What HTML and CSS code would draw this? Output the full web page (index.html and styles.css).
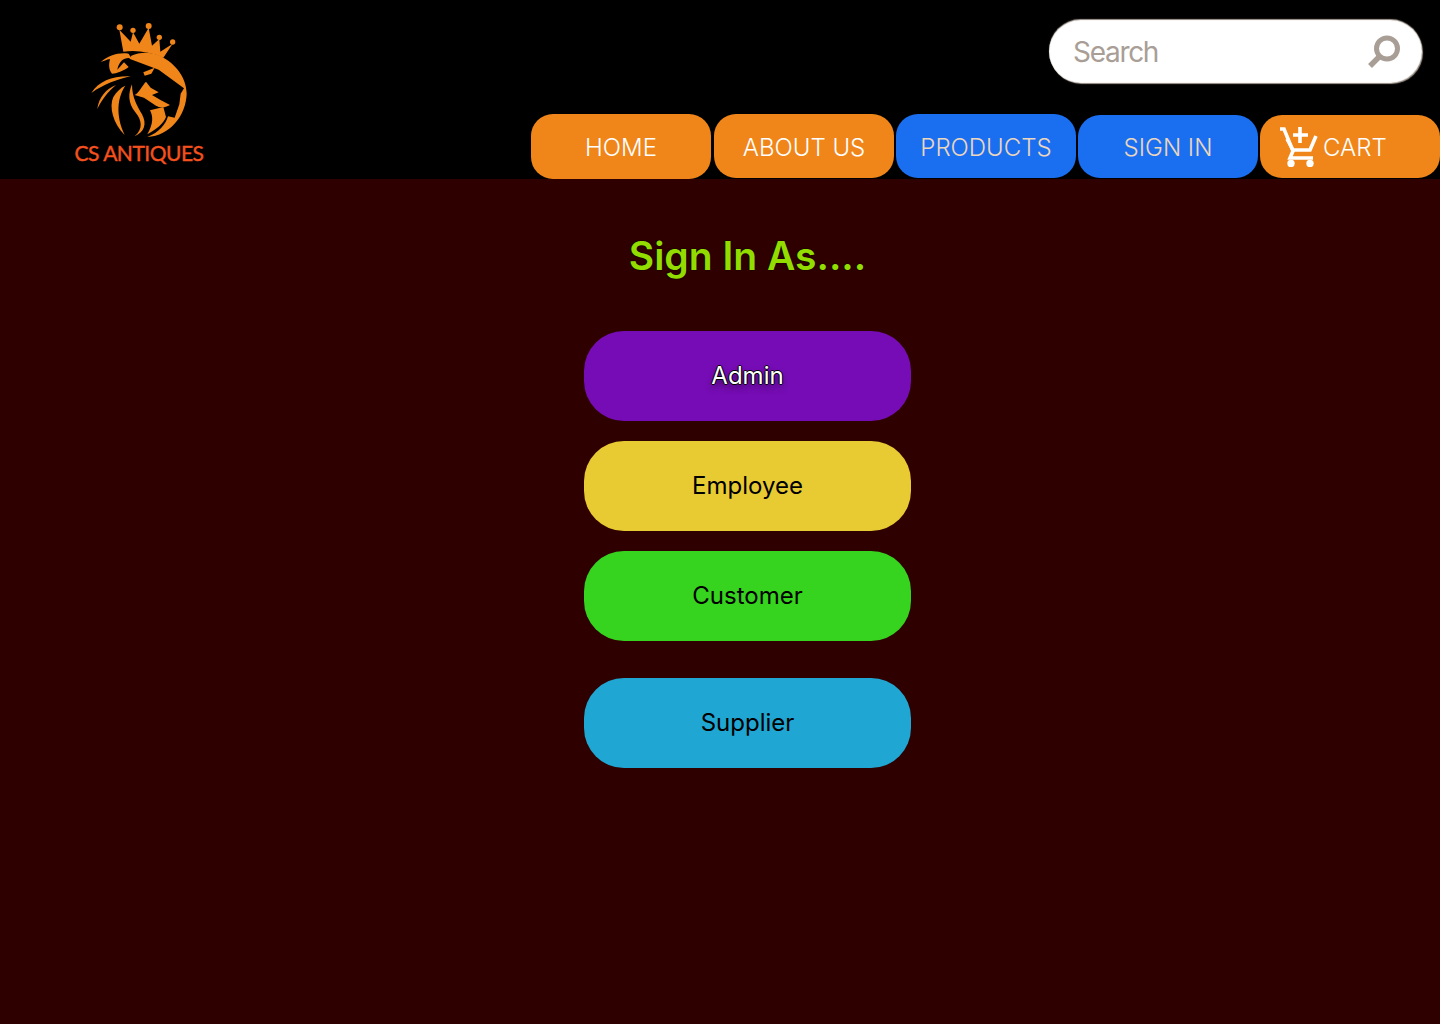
FILE: index.html
```html
<!DOCTYPE html>
<html lang="en">
<head>
    <meta charset="UTF-8">
    <meta name="viewport" content="width=device-width, initial-scale=1.0">
    <title>CS Antiques - Sign In</title>
    <link rel="stylesheet" href="styles.css">
</head>
<body>
    <header class="site-header">
        <a class="logo" href="#">
            <svg class="logo-mark" viewBox="90 38 294 345" aria-hidden="true">
                <g fill="#f0861a">
                    <circle cx="179" cy="51" r="9"/>
                    <circle cx="219" cy="60" r="8"/>
                    <circle cx="266" cy="47" r="9"/>
                    <circle cx="298" cy="81" r="8"/>
                    <circle cx="338" cy="95" r="8"/>
                    <path d="M190 124 L178 58 L212 94 L219 66 L238 100 L266 52 L276 106 L298 86 L301 124 L338 100 L310 142 Q250 116 190 124Z"/>
                    <path d="M300 136 C350 161 380 205 380 250 C378 315 330 376 262 380 C298 366 316 344 324 318 L344 322 L358 282 L362 250 L372 234 L296 178 L208 145 L214 136 C240 124 272 124 300 136Z"/>
                    <path d="M122 156 C146 134 176 126 206 130 L214 144 C194 140 178 150 172 178 L192 156 L206 170 C190 182 170 190 156 190 C146 178 146 162 150 146 C140 148 130 152 122 156Z"/>
                    <path d="M94 248 C116 212 160 196 212 198 C170 208 130 222 94 248Z"/>
                    <path d="M112 296 C116 262 138 236 168 224 C142 246 126 268 112 296Z"/>
                    <path d="M194 374 C160 340 146 290 160 260 C170 244 182 232 196 226 C172 262 166 314 194 374Z"/>
                    <path d="M224 378 C250 356 246 330 226 306 C204 278 204 250 216 222 C216 262 232 288 246 312 C262 342 252 366 224 378Z"/>
                    <path d="M250 186 L284 172 L274 190 L254 196Z"/>
                    <path d="M224 254 C238 246 246 226 258 214 L272 232 L296 246 L276 254 L300 268 L330 284 C310 296 296 290 288 286 L252 262Z"/>
                    <path d="M270 300 L310 290 L318 320 C310 340 290 356 262 372 C280 340 280 320 270 300Z"/>
                </g>
            </svg>
            <span class="logo-text">CS ANTIQUES</span>
        </a>

        <div class="header-right">
            <form class="search-box">
                <input class="search-input" type="text" placeholder="Search">
                <svg class="search-icon" viewBox="0 0 34 34" width="34" height="34" aria-hidden="true">
                    <circle cx="20" cy="13.5" r="10.5" fill="none" stroke="#a89e96" stroke-width="5"/>
                    <path d="M12 22 L3 31" stroke="#a89e96" stroke-width="5.5" fill="none"/>
                </svg>
            </form>
            <nav class="main-nav">
                <a class="nav-btn orange first" href="#">HOME</a>
                <a class="nav-btn orange tall" href="#">ABOUT US</a>
                <a class="nav-btn blue tall" href="#">PRODUCTS</a>
                <a class="nav-btn blue" href="#">SIGN IN</a>
                <a class="nav-btn orange cart" href="#">
                    <svg class="cart-icon" viewBox="0 0 38 40" width="38" height="40" aria-hidden="true">
                        <g fill="none" stroke="#fff" stroke-width="3.6">
                            <path d="M0 2 L4 2 L13 24 L10 31 L33 31"/>
                            <path d="M7 12 L13 23 L30 23 L36 9"/>
                            <path d="M20 0 L20 16 M13 8 L28 8"/>
                        </g>
                        <circle cx="11" cy="36.5" r="3.7" fill="#fff"/>
                        <circle cx="30" cy="36.5" r="3.7" fill="#fff"/>
                    </svg>
                    <span class="cart-label">CART</span>
                </a>
            </nav>
        </div>
    </header>

    <main class="signin">
        <h1 class="signin-title">Sign In As....</h1>
        <a class="role-btn admin" href="#">Admin</a>
        <a class="role-btn employee" href="#">Employee</a>
        <a class="role-btn customer" href="#">Customer</a>
        <a class="role-btn supplier" href="#">Supplier</a>
    </main>
</body>
</html>
```

FILE: styles.css
```css
* {
    box-sizing: border-box;
}

body {
    margin: 0;
    min-height: 1024px;
    background-color: #2f0000;
    font-family: 'Inter', sans-serif;
}

a {
    text-decoration: none;
}

.site-header {
    height: 179px;
    background-color: #000;
    display: flex;
    justify-content: space-between;
}

.logo {
    width: 130px;
    margin-left: 74px;
    padding-top: 23px;
    display: flex;
    flex-direction: column;
    align-items: center;
}

.logo-mark {
    display: block;
    width: 98px;
    height: 115px;
}

.logo-text {
    margin-top: 2px;
    color: #f4511e;
    font-family: 'Lato', sans-serif;
    font-size: 21px;
    letter-spacing: -0.5px;
    white-space: nowrap;
    -webkit-text-stroke: 0.4px #f4511e;
}

.header-right {
    display: flex;
    flex-direction: column;
    align-items: flex-end;
}

.search-box {
    width: 373px;
    height: 63px;
    margin: 20px 18px 31px 0;
    padding: 0 21px 0 24px;
    display: flex;
    align-items: center;
    background-color: #fff;
    border-radius: 32px;
    box-shadow: 1px 1px 1px #a89e96, 0 -1px 1px #a89e96, inset 0 0 1px #a89e96;
}

.search-input {
    flex: 1;
    min-width: 0;
    border: none;
    outline: none;
    padding: 0;
    background: none;
    font-family: 'Inter', sans-serif;
    font-size: 28px;
    letter-spacing: -1.3px;
}

.search-input::placeholder {
    color: #a89e96;
    opacity: 1;
}

.main-nav {
    display: flex;
    align-items: flex-end;
    gap: 2px;
    height: 64px;
}

.nav-btn {
    width: 180px;
    height: 63px;
    padding-top: 2px;
    display: flex;
    align-items: center;
    justify-content: center;
    border-radius: 22px;
    color: #fff;
    font-size: 24px;
    font-weight: 300;
}

.nav-btn.first {
    height: 65px;
    margin-right: 1px;
    margin-bottom: -1px;
}

.nav-btn.tall {
    height: 64px;
}

.nav-btn.orange {
    background-color: #f0861a;
}

.nav-btn.blue {
    background-color: #1a6ff0;
    color: #ecd6bd;
}

.nav-btn.cart {
    justify-content: flex-start;
    padding-top: 0;
    padding-left: 20px;
}

.cart-icon {
    margin-right: 5px;
}

.cart-label {
    padding-top: 2px;
}

.signin {
    padding-left: 55px;
    display: flex;
    flex-direction: column;
    align-items: center;
}

.signin-title {
    margin: 52px 0 50px;
    color: #92dc00;
    font-size: 39px;
    font-weight: 600;
    line-height: 50px;
    text-shadow: 0 0 2px #000;
}

.role-btn {
    width: 327px;
    height: 90px;
    margin-bottom: 20px;
    padding-bottom: 2px;
    display: flex;
    align-items: center;
    justify-content: center;
    border-radius: 40px;
    color: #000;
    font-size: 24px;
}

.admin {
    background-color: #760cb5;
    color: #fff;
    text-shadow: -1px 0 #000, 1px 0 #000, 0 -1px #000, 0 1px #000, 0 4px 6px rgba(0, 0, 0, 0.5);
}

.employee {
    background-color: #e8ca33;
}

.customer {
    background-color: #36d31f;
    margin-bottom: 37px;
}

.supplier {
    background-color: #1fa6d2;
}
```
